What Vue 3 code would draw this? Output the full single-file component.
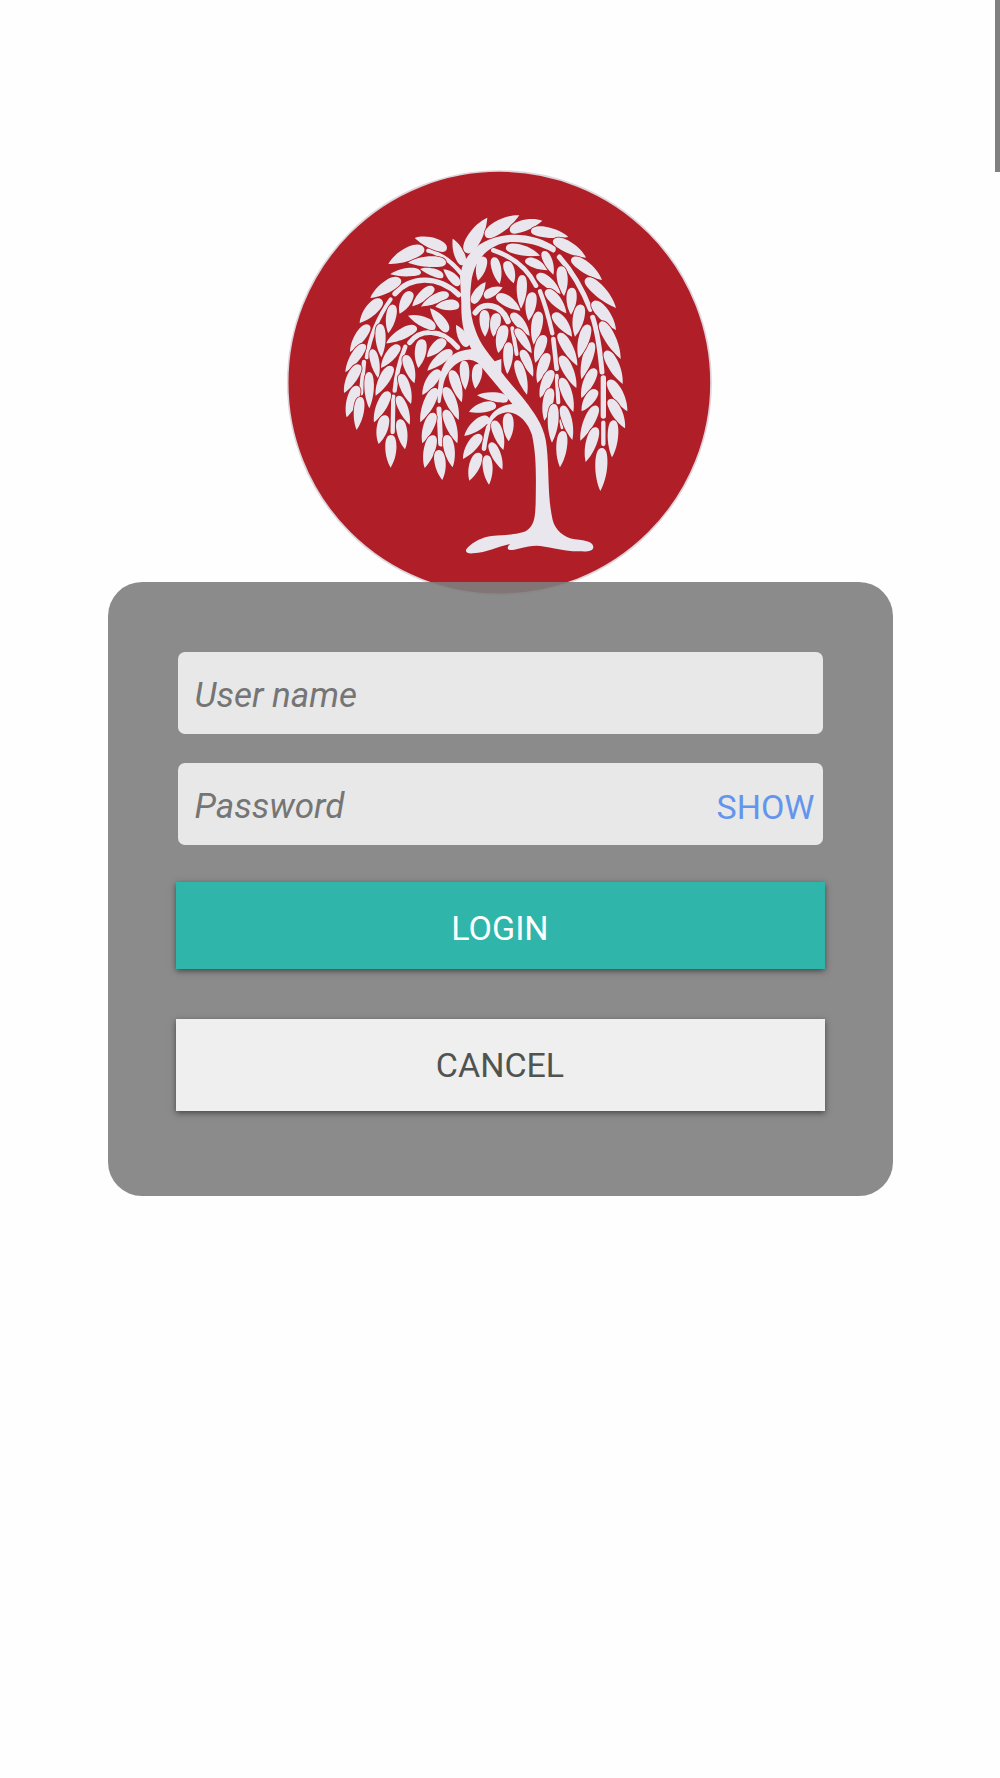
<script setup>
import { ref } from 'vue'

const username = ref('')
const password = ref('')
const visible = ref(false)

// Each leaf: stem x, stem y, tip x, tip y, width
const leaves = [
  [530, 298, 434, 264, 36], [462, 294, 355, 342, 42], [528, 338, 414, 338, 34], [453, 367, 361, 373, 27],
  [520, 380, 450, 357, 24], [568, 406, 520, 358, 28], [580, 345, 548, 266, 32], [588, 308, 652, 203, 44],
  [392, 388, 301, 444, 38], [335, 449, 269, 519, 38], [297, 525, 240, 606, 34], [424, 425, 389, 491, 34],
  [491, 412, 427, 469, 32], [536, 431, 453, 470, 30], [568, 466, 496, 470, 34], [533, 545, 480, 475, 32],
  [496, 535, 414, 497, 32], [370, 464, 355, 550, 32], [440, 532, 348, 580, 34], [330, 522, 334, 622, 32],
  [592, 590, 558, 525, 30], [284, 583, 226, 667, 32], [269, 644, 222, 729, 34], [263, 708, 230, 802, 36],
  [272, 741, 260, 840, 32], [306, 598, 325, 686, 28], [297, 666, 298, 775, 30], [388, 586, 333, 654, 33],
  [366, 649, 317, 737, 35], [357, 725, 312, 817, 34], [347, 796, 326, 882, 36], [363, 855, 362, 953, 35],
  [405, 616, 433, 700, 32], [391, 673, 423, 762, 32], [383, 738, 419, 824, 30], [389, 808, 405, 898, 33],
  [457, 568, 445, 654, 36], [526, 570, 471, 622, 34], [546, 602, 472, 662, 32], [509, 660, 457, 735, 34],
  [499, 715, 451, 817, 35], [493, 789, 457, 880, 34], [491, 856, 464, 954, 36], [505, 900, 517, 990, 35],
  [544, 661, 575, 757, 33], [524, 712, 566, 810, 34], [525, 780, 562, 880, 34], [529, 855, 548, 952, 34],
  [582, 632, 586, 720, 30], [625, 642, 616, 716, 32], [714, 750, 621, 736, 30], [678, 766, 597, 786, 32],
  [656, 802, 583, 858, 34], [633, 854, 579, 927, 34], [629, 909, 598, 992, 35], [650, 916, 657, 1004, 31],
  [661, 878, 697, 959, 30], [671, 812, 700, 900, 32], [714, 790, 716, 874, 34], [646, 259, 748, 196, 40],
  [720, 243, 817, 212, 36], [783, 242, 895, 261, 33], [850, 270, 948, 323, 36], [905, 325, 996, 390, 36],
  [947, 386, 1038, 474, 38], [968, 455, 1038, 540, 38], [992, 515, 1052, 627, 36], [1007, 603, 1058, 702, 36],
  [1016, 690, 1072, 784, 36], [1018, 748, 1065, 835, 34], [1031, 811, 1026, 922, 33], [996, 894, 991, 1023, 38],
  [708, 292, 810, 317, 33], [766, 330, 834, 361, 28], [820, 304, 850, 374, 28], [873, 349, 882, 438, 34],
  [801, 373, 872, 432, 33], [828, 420, 889, 490, 34], [850, 490, 906, 560, 35], [867, 550, 922, 647, 34],
  [872, 618, 919, 714, 34], [873, 684, 910, 786, 33], [877, 767, 907, 870, 32], [879, 843, 870, 952, 34],
  [906, 413, 903, 494, 32], [934, 464, 915, 560, 36], [968, 577, 934, 688, 33],
  [955, 524, 926, 625, 35], [976, 656, 934, 744, 34], [980, 720, 935, 784, 33], [981, 768, 931, 872, 35],
  [979, 832, 947, 936, 35], [757, 375, 753, 476, 32], [788, 427, 776, 512, 34], [808, 485, 791, 584, 35],
  [823, 556, 796, 638, 34], [834, 610, 802, 699, 34], [847, 661, 810, 744, 33], [843, 715, 823, 812, 33],
  [852, 762, 846, 878, 34], [642, 320, 624, 392, 32], [671, 322, 689, 402, 30], [708, 334, 731, 400, 32],
  [608, 460, 647, 396, 30], [643, 441, 698, 412, 29], [680, 436, 751, 482, 34], [724, 490, 779, 558, 31],
  [643, 480, 645, 560, 32], [681, 490, 670, 560, 33], [704, 526, 685, 609, 36], [737, 536, 785, 610, 28],
  [716, 577, 712, 672, 31], [755, 600, 789, 680, 29], [740, 631, 771, 734, 31]
]

const twigs = [
  ['M475 302C518 312 552 342 580 378', 13],
  ['M375 431C420 380 500 373 566 434', 16],
  ['M419 578C450 536 514 534 563 592', 15],
  ['M362 448C325 500 300 560 290 622', 12],
  ['M282 636L273 730', 13],
  ['M406 590C390 630 378 680 374 722', 13],
  ['M370 740L368 846', 13],
  ['M507 777L512 882', 15],
  ['M656 828C650 850 644 872 642 896', 14],
  ['M670 301C722 318 770 350 798 407', 14],
  ['M616 488C640 455 692 460 714 514', 17],
  ['M727 535L740 612', 12],
  ['M810 424C826 464 838 510 847 550', 13],
  ['M850 567L860 656', 14],
  ['M860 677L865 757', 12],
  ['M872 812L876 834', 8],
  ['M868 321C898 355 932 404 961 478', 15],
  ['M968 502C984 550 990 600 996 666', 15],
  ['M1000 684L1000 798', 16],
  ['M1000 818L1000 882', 13]
]

// Rounded at the stem, pointed at the tip, with the belly arched upwards
function leafPath([x, y, tipX, tipY, width]) {
  const dx = tipX - x
  const dy = tipY - y
  const length = Math.hypot(dx, dy)
  const sign = dx < 0 ? 1 : -1
  const nx = (-dy / length) * sign
  const ny = (dx / length) * sign
  const half = width * 0.48
  const bend = (Math.abs(dx) / length) * 3
  const at = (along, across) =>
    `${(x + dx * along + nx * across).toFixed(1)} ${(y + dy * along + ny * across).toFixed(1)}`
  return `M${x} ${y}` +
    `C${at(0, half * 0.7)} ${at(0.14, half + bend)} ${at(0.36, half + bend)}` +
    `C${at(0.62, half + bend)} ${at(0.86, half * 0.5 + bend)} ${tipX} ${tipY}` +
    `C${at(0.84, bend - half * 0.55)} ${at(0.62, bend - half)} ${at(0.36, bend - half)}` +
    `C${at(0.14, bend - half)} ${at(0, -half * 0.7)} ${x} ${y}Z`
}
</script>

<template>
  <main class="page">
    <svg class="logo" viewBox="51 60 1278 1278" role="img" aria-label="Willow tree">
      <circle cx="688" cy="698" r="635" fill="#b01f28" stroke="#ddd4dc" stroke-width="5" />
      <g class="tree">
        <path
          v-for="[d, width] in twigs"
          :key="d"
          :d="d"
          class="twig"
          :stroke-width="width"
        />
        <path v-for="(leaf, i) in leaves" :key="i" class="leaf" :d="leafPath(leaf)" />
        <path
          d="M576 352C596 300 640 262 715 255C770 251 820 266 856 291Q861 305 850 308C800 281 750 272 705 278C655 288 612 330 604 395C597 450 600 500 618 545C630 580 655 610 674 634L694 627L694 666C715 695 750 730 775 765C800 800 825 835 830 890C838 960 832 1040 848 1110C856 1140 880 1163 915 1168C950 1171 970 1178 970 1191C970 1205 950 1205 930 1204C870 1204 830 1187 800 1187C765 1188 740 1200 720 1200C710 1198 712 1190 720 1182C680 1190 650 1208 610 1210C588 1212 582 1203 594 1192C610 1175 640 1160 665 1158C720 1154 748 1152 768 1143C795 1125 795 1100 797 1060C798 980 800 920 786 855C775 820 750 790 715 787C690 788 670 800 660 826L650 822C662 785 690 765 727 762L640 658Q622 630 598 629C560 628 528 665 520 705L512 755Q507 765 503 755C503 700 508 660 530 632C550 605 582 600 604 597C582 555 573 520 574 460L570 380Z"
        />
      </g>
    </svg>

    <form class="card" @submit.prevent>
      <div class="field">
        <input v-model="username" type="text" placeholder="User name" aria-label="User name" />
      </div>
      <div class="field">
        <input
          v-model="password"
          :type="visible ? 'text' : 'password'"
          placeholder="Password"
          aria-label="Password"
        />
        <button class="show" type="button" @click="visible = !visible">
          {{ visible ? 'HIDE' : 'SHOW' }}
        </button>
      </div>
      <button class="action login" type="submit">LOGIN</button>
      <button class="action cancel" type="button">CANCEL</button>
    </form>

    <div class="scroll-thumb" aria-hidden="true"></div>
  </main>
</template>

<style>
body {
  background: #fefefe;
}
</style>

<style scoped>
.page {
  display: flex;
  flex-direction: column;
  align-items: center;
  padding: 170px 10% 64px;
  font-family: Roboto, "Liberation Sans", sans-serif;
  font-size: 34px;
}

.logo {
  display: block;
  width: 100%;
  max-width: 426px;
}

.tree {
  fill: #eae6ed;
}

.leaf {
  stroke: #b01f28;
  stroke-width: 5px;
  paint-order: stroke;
}

.twig {
  fill: none;
  stroke: #eae6ed;
  stroke-linecap: round;
}

.card {
  position: relative;
  box-sizing: border-box;
  display: flex;
  flex-direction: column;
  width: 100%;
  max-width: 785px;
  margin-top: -14px;
  padding: 70px 68px 85px;
  border-radius: 34px;
  background: rgba(126, 126, 126, 0.9);
}

.field {
  box-sizing: border-box;
  display: flex;
  align-items: center;
  height: 82px;
  margin: 0 2px 29px;
  padding: 5px 8px 0 17px;
  border-radius: 7px;
  background: #e8e8e8;
}

.field input {
  flex: 1;
  min-width: 0;
  padding: 0;
  border: 0;
  outline: 0;
  background: transparent;
  color: #505050;
  font: inherit;
  font-size: 35px;
}

.field input::placeholder {
  color: #757575;
  font-style: italic;
  opacity: 1;
}

button {
  border: 0;
  font: inherit;
  cursor: pointer;
}

.show {
  padding: 0;
  background: transparent;
  color: #6495ed;
}

.action {
  box-shadow: 0 2px 6px rgba(0, 0, 0, 0.5);
}

.login {
  height: 87px;
  margin-top: 8px;
  padding: 4px 0 0;
  background: #2fb5aa;
  color: #fff;
}

.cancel {
  height: 92px;
  margin-top: 50px;
  padding: 0;
  background: #efefef;
  color: #505451;
}

.scroll-thumb {
  position: fixed;
  top: 0;
  right: 0;
  width: 5px;
  height: 172px;
  background: #808080;
}
</style>
